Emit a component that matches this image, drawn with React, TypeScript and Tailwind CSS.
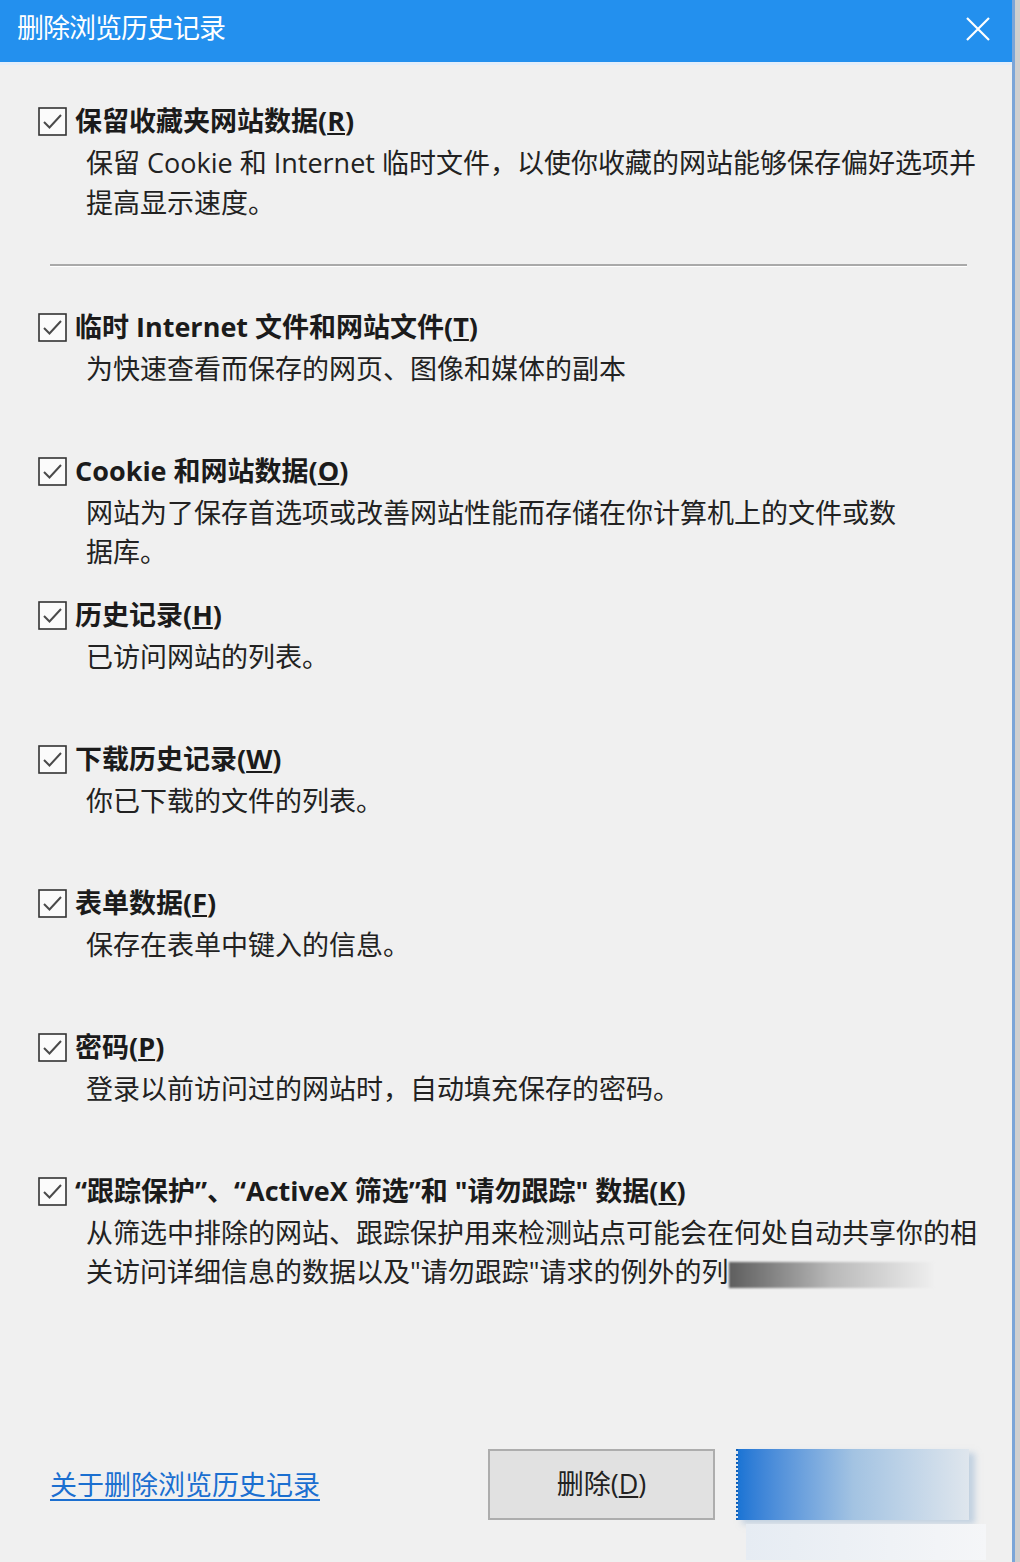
import React from "react";

const font = { fontFamily: '"Open Sans", "Noto Sans CJK SC", "Microsoft YaHei", sans-serif' };

type Item = { title: React.ReactNode; lines: React.ReactNode[] };

const items: Item[] = [
  {
    title: <>临时 Internet 文件和网站文件(<u>T</u>)</>,
    lines: ["为快速查看而保存的网页、图像和媒体的副本"],
  },
  {
    title: <>Cookie 和网站数据(<u>O</u>)</>,
    lines: ["网站为了保存首选项或改善网站性能而存储在你计算机上的文件或数", "据库。"],
  },
  { title: <>历史记录(<u>H</u>)</>, lines: ["已访问网站的列表。"] },
  { title: <>下载历史记录(<u>W</u>)</>, lines: ["你已下载的文件的列表。"] },
  { title: <>表单数据(<u>F</u>)</>, lines: ["保存在表单中键入的信息。"] },
  { title: <>密码(<u>P</u>)</>, lines: ["登录以前访问过的网站时，自动填充保存的密码。"] },
  {
    title: <>“跟踪保护”、“ActiveX 筛选”和 "请勿跟踪" 数据(<u>K</u>)</>,
    lines: [
      "从筛选中排除的网站、跟踪保护用来检测站点可能会在何处自动共享你的相",
      <>
        关访问详细信息的数据以及"请勿跟踪"请求的例外的列
        <span className="inline-block align-middle w-[205px] h-[26px] bg-gradient-to-r from-[#5e5e5e] via-[#b9b9b9] to-[#efefef] blur-[1px]" />
      </>,
    ],
  },
];

function CheckBox() {
  return (
    <svg width="29" height="29" viewBox="0 0 29 29" className="shrink-0">
      <rect x="1" y="1" width="27" height="27" fill="#fbfbfb" stroke="#333" strokeWidth="1.6" />
      <path d="M6 15 L11.5 20.5 L23 8" fill="none" stroke="#4a4a4a" strokeWidth="2" />
    </svg>
  );
}

function Option({ item }: { item: Item }) {
  return (
    <div className="h-[144px] shrink-0">
      <div className="flex items-center gap-2 h-9">
        <CheckBox />
        <span className="text-[27px] font-bold text-[#1b1b1b] whitespace-nowrap leading-9">{item.title}</span>
      </div>
      <div className="pl-[48px] mt-1 text-[27px] leading-[39px] text-[#222] whitespace-nowrap">
        {item.lines.map((l, i) => (
          <div key={i}>{l}</div>
        ))}
      </div>
    </div>
  );
}

export default function App() {
  return (
    <div className="flex w-[1020px] h-[1562px] overflow-hidden bg-[#d0d0d0]" style={font}>
      <div className="w-[1012px] flex flex-col bg-[#f0f0f0]">
        {/* Title bar */}
        <div className="h-[62px] shrink-0 bg-[#2390ee] flex items-center justify-between pl-[17px] pr-[22px] pb-2">
          <span className="text-white text-[27px] leading-none tracking-[-1px]">删除浏览历史记录</span>
          <svg width="24" height="24" viewBox="0 0 24 24" className="mt-1">
            <path d="M1 1 L23 23 M23 1 L1 23" stroke="#fff" strokeWidth="2.2" />
          </svg>
        </div>
        <div className="h-[3px] shrink-0 bg-[#e4eefa]" />

        <div className="flex-1 flex flex-col pl-[38px] pt-[38px]">
          <div className="h-[144px] shrink-0">
            <div className="flex items-center gap-2 h-9">
              <CheckBox />
              <span className="text-[27px] font-bold text-[#1b1b1b] whitespace-nowrap leading-9">
                保留收藏夹网站数据(<u>R</u>)
              </span>
            </div>
            <div className="pl-[48px] mt-1 text-[27px] leading-[40px] text-[#222] whitespace-nowrap">
              <div>保留 Cookie 和 Internet 临时文件，以使你收藏的网站能够保存偏好选项并</div>
              <div>提高显示速度。</div>
            </div>
          </div>

          <div className="mt-[17px] mb-[42px] ml-[12px] w-[917px] shrink-0">
            <div className="h-[2px] bg-[#a9a9a9]" />
            <div className="h-px bg-white" />
          </div>

          {items.map((it, i) => (
            <Option key={i} item={it} />
          ))}

          {/* Footer */}
          <div className="mt-[132px] flex items-start shrink-0">
            <a className="mt-[20px] ml-[12px] text-[27px] leading-8 text-[#1b6fd0] underline underline-offset-4 whitespace-nowrap">
              关于删除浏览历史记录
            </a>
            <div className="ml-[168px] w-[227px] h-[71px] bg-[#e1e1e1] border-2 border-[#adadad] flex items-center justify-center text-[27px] text-[#222]">
              删除(<u>D</u>)
            </div>
            <div className="ml-[21px] flex flex-col">
              <div className="w-[233px] h-[71px] bg-gradient-to-r from-[#1a74d4] via-[#a3c3e2] to-[#dfe6ed] border-l-2 border-dotted border-[#0d5fb8] shadow-[6px_4px_6px_rgba(150,180,210,0.5)]" />
              <div className="w-[240px] h-[36px] mt-1 ml-[10px] bg-gradient-to-r from-[#e6ecf3] to-[#f5f6f8]" />
            </div>
          </div>
        </div>
      </div>
      <div className="w-[3px] bg-[#7ba5d8]" />
      <div className="w-[5px] bg-[#cfcfcf]" />
    </div>
  );
}
